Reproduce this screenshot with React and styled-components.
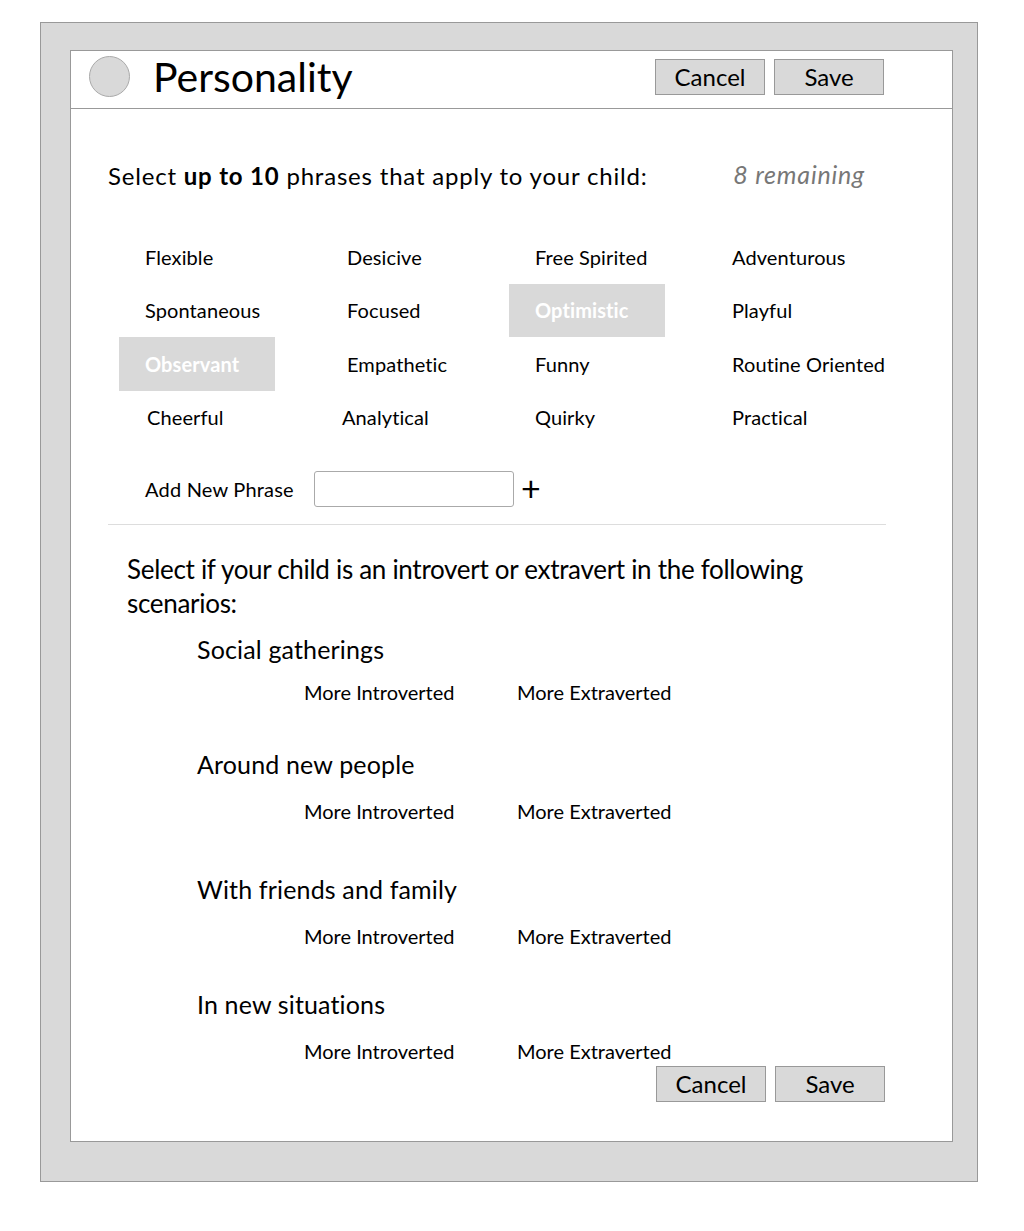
import React from 'react'
import styled, { createGlobalStyle } from 'styled-components'

const GlobalStyle = createGlobalStyle`
  body {
    margin: 0;
    background: #fff;
    font-family: Lato, "Noto Sans", sans-serif;
    color: #000;
  }
`

const SCPage = styled.div`
  padding: 22px 0 0 40px;
`

const SCFrame = styled.div`
  width: 938px;
  height: 1160px;
  box-sizing: border-box;
  background: #d9d9d9;
  border: 1px solid #999;
  padding: 27px 24px 0 29px;
`

const SCPanel = styled.div`
  width: 883px;
  height: 1092px;
  box-sizing: border-box;
  background: #fff;
  border: 1px solid #999;
  display: flex;
  flex-direction: column;
`

const SCHeader = styled.div`
  height: 58px;
  box-sizing: border-box;
  border-bottom: 1px solid #999;
  display: flex;
  align-items: center;
  padding: 0 68px 6px 18px;
`

const SCAvatar = styled.div`
  width: 41px;
  height: 41px;
  border-radius: 50%;
  background: #d9d9d9;
  border: 1px solid #aaa;
  box-sizing: border-box;
`

const SCTitle = styled.h1`
  margin: 0 0 0 23px;
  font-size: 41px;
  font-weight: 400;
  flex: 1;
  line-height: 1;
`

const SCButtons = styled.div`
  display: flex;
  gap: 9px;
  margin-top: ${props => props.top || 0}px;
  justify-content: flex-end;
  padding-right: ${props => props.right || 0}px;
`

const SCButton = styled.button`
  width: 110px;
  height: 36px;
  box-sizing: border-box;
  background: #d9d9d9;
  border: 1px solid #999;
  font-family: inherit;
  font-size: 24px;
  color: #000;
  padding: 0;
  line-height: 1;
`

const SCBody = styled.div`
  padding: 50px 0 0 37px;
  flex: 1;
  display: flex;
  flex-direction: column;
`

const SCPrompt = styled.div`
  display: flex;
  justify-content: space-between;
  align-items: center;
  width: 757px;
  font-size: 24px;
  line-height: 34px;
  letter-spacing: 0.8px;
  b {
    font-weight: 700;
  }
`

const SCRemaining = styled.span`
  color: #777;
  font-style: italic;
  font-size: 25px;
  letter-spacing: 0.8px;
  margin-top: -4px;
`

const SCGrid = styled.div`
  display: grid;
  grid-template-columns: 202px 188px 197px 180px;
  grid-auto-rows: 53.5px;
  margin: 37px 0 0 11px;
`

const SCPhrase = styled.div`
  width: 156px;
  display: flex;
  align-items: center;
  box-sizing: border-box;
  padding-left: ${props => 26 + (props.shift || 0)}px;
  font-size: 20px;
  letter-spacing: 0.1px;
  white-space: nowrap;
  background: ${props => props['data-active'] ? '#d9d9d9' : 'transparent'};
  color: ${props => props['data-active'] ? '#fff' : '#000'};
  font-weight: ${props => props['data-active'] ? 700 : 400};
`

const SCAddRow = styled.div`
  display: flex;
  align-items: center;
  margin: 27px 0 0 37px;
  font-size: 20px;
  letter-spacing: 0.2px;
`

const SCInput = styled.input`
  width: 200px;
  height: 36px;
  box-sizing: border-box;
  border: 1px solid #aaa;
  border-radius: 3px;
  margin-left: 20px;
`

const SCPlus = styled.span`
  font-size: 34px;
  font-weight: 400;
  margin: -2px 0 0 7px;
  line-height: 1;
`

const SCRule = styled.hr`
  width: 778px;
  margin: 17px 0 0 0;
  border: 0;
  border-top: 1px solid #ddd;
`

const SCIntro = styled.p`
  margin: 27px 0 0 19px;
  width: 700px;
  font-size: 26px;
  line-height: 34px;
  letter-spacing: -0.3px;
`

const SCScenario = styled.div`
  margin: ${props => props.gap}px 0 0 89px;
`

const SCScenarioTitle = styled.div`
  font-size: 25px;
  line-height: 30px;
  letter-spacing: 0.15px;
`

const SCOptions = styled.div`
  display: flex;
  margin: ${props => props.gap}px 0 0 107px;
  font-size: 20px;
  line-height: 24px;
  span {
    width: 213px;
  }
`

const phrases = [
  ['Flexible'], ['Desicive'], ['Free Spirited'], ['Adventurous'],
  ['Spontaneous'], ['Focused'], ['Optimistic', true], ['Playful'],
  ['Observant', true], ['Empathetic'], ['Funny'], ['Routine Oriented'],
  ['Cheerful', false, 2], ['Analytical', false, -5], ['Quirky'], ['Practical']
]

const scenarios = [
  { title: 'Social gatherings', top: 14, inner: 16 },
  { title: 'Around new people', top: 45, inner: 20 },
  { title: 'With friends and family', top: 51, inner: 20 },
  { title: 'In new situations', top: 41, inner: 20 }
]

class App extends React.Component {
  render () {
    return (
      <SCPage>
        <GlobalStyle />
        <SCFrame>
          <SCPanel>
            <SCHeader>
              <SCAvatar />
              <SCTitle>Personality</SCTitle>
              <SCButtons>
                <SCButton>Cancel</SCButton>
                <SCButton>Save</SCButton>
              </SCButtons>
            </SCHeader>
            <SCBody>
              <SCPrompt>
                <span>Select <b>up to 10</b> phrases that apply to your child:</span>
                <SCRemaining>8 remaining</SCRemaining>
              </SCPrompt>
              <SCGrid>
                {phrases.map(([label, active, shift]) => (
                  <SCPhrase key={label} data-active={active} shift={shift}>{label}</SCPhrase>
                ))}
              </SCGrid>
              <SCAddRow>
                Add New Phrase
                <SCInput type="text" />
                <SCPlus>+</SCPlus>
              </SCAddRow>
              <SCRule />
              <SCIntro>Select if your child is an introvert or extravert in the following scenarios:</SCIntro>
              {scenarios.map(s => (
                <SCScenario key={s.title} gap={s.top}>
                  <SCScenarioTitle>{s.title}</SCScenarioTitle>
                  <SCOptions gap={s.inner}>
                    <span>More Introverted</span>
                    <span>More Extraverted</span>
                  </SCOptions>
                </SCScenario>
              ))}
              <SCButtons top={3} right={67}>
                <SCButton>Cancel</SCButton>
                <SCButton>Save</SCButton>
              </SCButtons>
            </SCBody>
          </SCPanel>
        </SCFrame>
      </SCPage>
    )
  }
}

export default App
